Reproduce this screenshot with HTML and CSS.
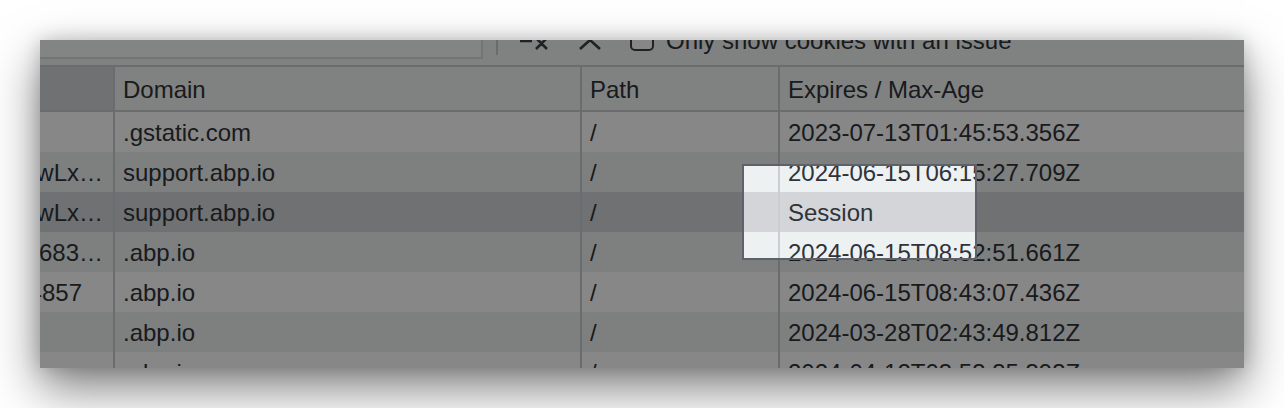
FILE: index.html
```html
<!DOCTYPE html>
<html>
<head>
<meta charset="utf-8">
<link rel="stylesheet" href="styles.css">
</head>
<body>
<div class="window">
  <div class="toolbar">
    <div class="filter"></div>
    <div class="sep"></div>
    <svg class="icon icon-clear" width="32" height="32" viewBox="0 0 32 32">
      <path d="M2 4H28M2 10H24M2 16H14M18 13L29 24M29 13L18 24" fill="none" stroke="#3c3f44" stroke-width="2.6"/>
    </svg>
    <svg class="icon icon-up" width="32" height="32" viewBox="0 0 32 32">
      <path d="M6 24L16 15L26 24" fill="none" stroke="#3c3f44" stroke-width="2.6"/>
    </svg>
    <span class="checkbox"></span>
    <span class="label">Only show cookies with an issue</span>
  </div>
  <div class="row head">
    <div class="cell name sorted"></div>
    <div class="cell">Domain</div>
    <div class="cell">Path</div>
    <div class="cell">Expires / Max-Age</div>
  </div>
  <div class="row">
    <div class="cell name"></div>
    <div class="cell">.gstatic.com</div>
    <div class="cell">/</div>
    <div class="cell">2023-07-13T01:45:53.356Z</div>
  </div>
  <div class="row alt">
    <div class="cell name">wLx…</div>
    <div class="cell">support.abp.io</div>
    <div class="cell">/</div>
    <div class="cell">2024-06-15T06:15:27.709Z</div>
  </div>
  <div class="row sel">
    <div class="cell name">wLx…</div>
    <div class="cell">support.abp.io</div>
    <div class="cell">/</div>
    <div class="cell">Session</div>
  </div>
  <div class="row alt">
    <div class="cell name">5683…</div>
    <div class="cell">.abp.io</div>
    <div class="cell">/</div>
    <div class="cell">2024-06-15T08:52:51.661Z</div>
  </div>
  <div class="row">
    <div class="cell name short">4857</div>
    <div class="cell">.abp.io</div>
    <div class="cell">/</div>
    <div class="cell">2024-06-15T08:43:07.436Z</div>
  </div>
  <div class="row alt">
    <div class="cell name"></div>
    <div class="cell">.abp.io</div>
    <div class="cell">/</div>
    <div class="cell">2024-03-28T02:43:49.812Z</div>
  </div>
  <div class="row">
    <div class="cell name"></div>
    <div class="cell">.abp.io</div>
    <div class="cell">/</div>
    <div class="cell">2024-04-12T03:53:35.393Z</div>
  </div>
  <div class="spot"></div>
</div>
</body>
</html>
```

FILE: styles.css
```css
html, body {
  margin: 0;
  padding: 0;
  background: #ffffff;
}

body {
  padding: 40px;
  font-family: "Liberation Sans", Arial, Helvetica, sans-serif;
  font-size: 24px;
  color: #303338;
}

.window {
  position: relative;
  width: 1204px;
  height: 328px;
  overflow: hidden;
  background: #ffffff;
  box-shadow: 0 20px 45px rgba(0, 0, 0, 0.5), 0 0 18px rgba(0, 0, 0, 0.18);
}

.toolbar {
  display: flex;
  align-items: center;
  height: 48px;
  padding-top: 4px;
  margin-top: -27px;
  background: #f1f3f4;
  border-bottom: 2px solid #c9ccd0;
  white-space: nowrap;
}

.filter {
  flex: none;
  box-sizing: border-box;
  width: 453px;
  height: 42px;
  margin-left: -10px;
  margin-top: -6px;
  background: #f8f9fa;
  border: 2px solid #dadce0;
}

.sep {
  flex: none;
  width: 2px;
  height: 32px;
  margin-left: 13px;
  margin-top: -4px;
  background: #c8cbcf;
}

.icon {
  flex: none;
  display: block;
}

.icon-clear {
  margin-left: 20px;
}

.icon-up {
  margin-left: 24px;
}

.checkbox {
  flex: none;
  box-sizing: border-box;
  width: 24px;
  height: 24px;
  margin-left: 24px;
  margin-top: -4px;
  border: 2px solid #3c3f44;
  border-radius: 5px;
  background: #ffffff;
}

.label {
  margin-left: 12px;
}

.row {
  display: grid;
  grid-template-columns: 73px 467px 198px 1fr;
  height: 40px;
  background: #ffffff;
}

.row.alt {
  background: #eef1f2;
}

.row.sel {
  background: #d3d5d9;
}

.row.head {
  box-sizing: border-box;
  height: 45px;
  background: #f1f3f4;
  border-bottom: 2px solid #c9ccd0;
}

.cell {
  display: flex;
  align-items: center;
  box-sizing: border-box;
  padding-left: 8px;
  padding-top: 2px;
  border-left: 2px solid #cbcdd1;
  white-space: nowrap;
  overflow: hidden;
}

.cell.name {
  border-left: none;
  padding-left: 0;
  padding-right: 10px;
  justify-content: flex-end;
}

.cell.name.short {
  padding-right: 31px;
}

.cell.sorted {
  background: #d3d5d8;
}

.spot {
  position: absolute;
  left: 702px;
  top: 124px;
  width: 235px;
  height: 96px;
  box-sizing: border-box;
  border: 2px solid #5d6169;
  box-shadow: 0 0 0 2000px rgba(0, 0, 0, 0.47);
}
```
